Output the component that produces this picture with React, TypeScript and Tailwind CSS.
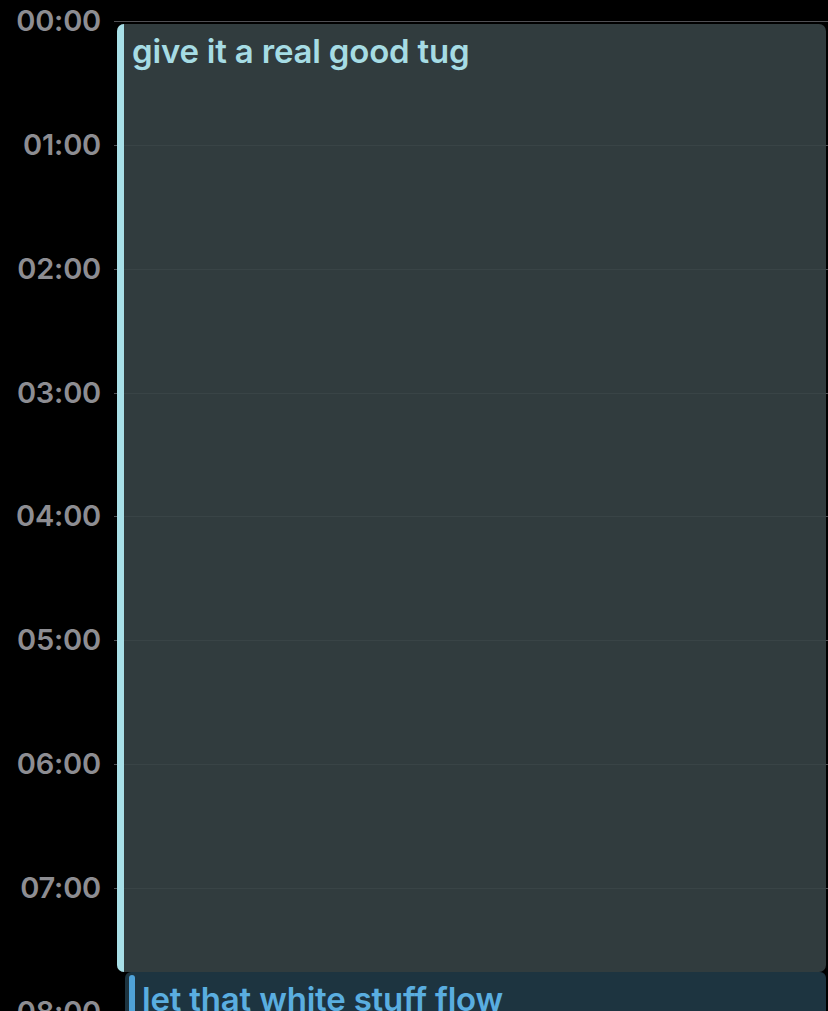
import React from "react";

const hours = ["00:00", "01:00", "02:00", "03:00", "04:00", "05:00", "06:00", "07:00", "08:00"];

export default function App() {
  return (
    <div
      className="relative w-[828px] h-[1011px] overflow-hidden bg-black"
      style={{ fontFamily: "Inter, 'Noto Sans', sans-serif" }}
    >
      <div className="pt-[21px]">
        {hours.map((h) => (
          <div key={h} className="flex h-[123.86px]">
            <div className="w-[114px] shrink-0 pr-[13px] text-right">
              <span className="block -mt-[15px] text-[29px] leading-[30px] font-semibold text-[#8d8d92] tracking-[-0.2px]">
                {h}
              </span>
            </div>
            <div className="flex-1 h-px bg-[#505054]" />
          </div>
        ))}
      </div>

      <div className="absolute left-[117px] top-[24px] w-[709px] h-[948px] rounded-[7px] overflow-hidden bg-[rgba(54,67,69,0.9)]">
        <div className="absolute left-0 top-0 bottom-0 w-[7px] bg-[#a8dfe7]" />
        <div className="pl-[15px] pt-[7px] text-[33px] leading-[40px] font-semibold text-[#a6dce4] tracking-[-0.2px]">
          give it a real good tug
        </div>
      </div>

      <div className="absolute left-[125px] top-[972px] w-[701px] h-[200px] rounded-[6px] bg-[#1d3440]">
        <div className="absolute left-[4px] top-[3px] bottom-0 w-[6px] rounded-t-[4px] bg-[#4fa3d9]" />
        <div className="pl-[17px] pt-[7px] text-[33px] leading-[40px] font-semibold text-[#5aaee0] tracking-[-0.2px]">
          let that white stuff flow
        </div>
      </div>
    </div>
  );
}
